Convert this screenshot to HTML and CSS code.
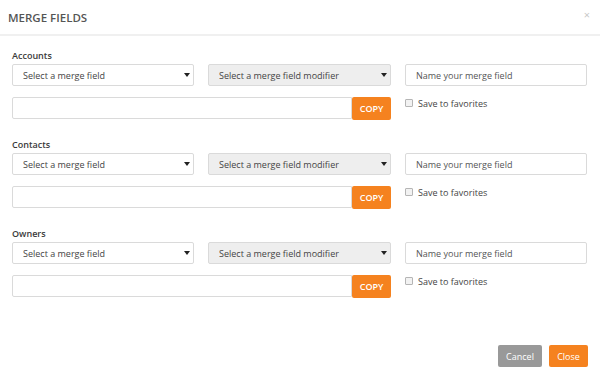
FILE: index.html
```html
<!DOCTYPE html>
<html lang="en">
<head>
    <meta charset="UTF-8">
    <title>Merge Fields</title>
    <link rel="stylesheet" href="styles.css">
</head>
<body>
<div class="modal">
    <div class="modal__header">
        <h4 class="modal__title">MERGE FIELDS</h4>
        <span class="modal__close">&times;</span>
    </div>
    <div class="modal__body">

        <div class="group">
            <div class="group__label">Accounts</div>
            <div class="grid">
                <div class="select-wrap">
                    <select class="field"><option>Select a merge field</option></select>
                    <svg class="arrow" width="6" height="4" viewBox="0 0 6 4"><path d="M0 0H6L3 4Z" fill="#222"/></svg>
                </div>
                <div class="select-wrap">
                    <select class="field field--muted"><option>Select a merge field modifier</option></select>
                    <svg class="arrow" width="6" height="4" viewBox="0 0 6 4"><path d="M0 0H6L3 4Z" fill="#222"/></svg>
                </div>
                <input class="field" type="text" placeholder="Name your merge field">
                <div class="copy-group">
                    <input class="field copy-group__input" type="text">
                    <button class="btn btn--orange copy-group__btn">COPY</button>
                </div>
                <label class="fav"><input type="checkbox" class="fav__box"> Save to favorites</label>
            </div>
        </div>

        <div class="group">
            <div class="group__label">Contacts</div>
            <div class="grid">
                <div class="select-wrap">
                    <select class="field"><option>Select a merge field</option></select>
                    <svg class="arrow" width="6" height="4" viewBox="0 0 6 4"><path d="M0 0H6L3 4Z" fill="#222"/></svg>
                </div>
                <div class="select-wrap">
                    <select class="field field--muted"><option>Select a merge field modifier</option></select>
                    <svg class="arrow" width="6" height="4" viewBox="0 0 6 4"><path d="M0 0H6L3 4Z" fill="#222"/></svg>
                </div>
                <input class="field" type="text" placeholder="Name your merge field">
                <div class="copy-group">
                    <input class="field copy-group__input" type="text">
                    <button class="btn btn--orange copy-group__btn">COPY</button>
                </div>
                <label class="fav"><input type="checkbox" class="fav__box"> Save to favorites</label>
            </div>
        </div>

        <div class="group">
            <div class="group__label">Owners</div>
            <div class="grid">
                <div class="select-wrap">
                    <select class="field"><option>Select a merge field</option></select>
                    <svg class="arrow" width="6" height="4" viewBox="0 0 6 4"><path d="M0 0H6L3 4Z" fill="#222"/></svg>
                </div>
                <div class="select-wrap">
                    <select class="field field--muted"><option>Select a merge field modifier</option></select>
                    <svg class="arrow" width="6" height="4" viewBox="0 0 6 4"><path d="M0 0H6L3 4Z" fill="#222"/></svg>
                </div>
                <input class="field" type="text" placeholder="Name your merge field">
                <div class="copy-group">
                    <input class="field copy-group__input" type="text">
                    <button class="btn btn--orange copy-group__btn">COPY</button>
                </div>
                <label class="fav"><input type="checkbox" class="fav__box"> Save to favorites</label>
            </div>
        </div>

    </div>
    <div class="modal__footer">
        <button class="btn btn--gray">Cancel</button>
        <button class="btn btn--orange">Close</button>
    </div>
</div>
</body>
</html>
```

FILE: styles.css
```css
body {
  margin: 0;
  padding: 0;
  font-family: "Open Sans", Arial, sans-serif;
  background-color: #FFFFFF;
  color: #333333;
}

.modal {
  width: 600px;
  height: 377px;
  display: flex;
  flex-direction: column;
}

.modal__header {
  height: 34px;
  padding: 0 8px;
  display: flex;
  align-items: center;
  justify-content: space-between;
  border-bottom: 2px solid #F0F0F0;
}

.modal__title {
  margin: 0;
  font-size: 11.5px;
  font-weight: 600;
  color: #555555;
}

.modal__close {
  font-size: 11px;
  color: #C8C8C8;
  margin-right: 2px;
  margin-top: -6px;
}

.modal__body {
  padding: 13px 13px 0 12px;
}

.group {
  margin-bottom: 18px;
}

.group__label {
  font-size: 9px;
  font-weight: 600;
  line-height: 14px;
  margin-bottom: 1px;
  color: #3A3A3A;
}

.grid {
  display: grid;
  grid-template-columns: 182px 183px 182px;
  column-gap: 14px;
  row-gap: 11px;
}

.field {
  display: block;
  box-sizing: border-box;
  width: 100%;
  height: 22px;
  margin: 0;
  padding: 0 10px;
  border: 1px solid #DADADA;
  border-radius: 2px;
  background-color: #FFFFFF;
  font-family: inherit;
  font-size: 9px;
  color: #444444;
  outline: none;
}

select.field {
  appearance: none;
  -webkit-appearance: none;
}

.field::placeholder {
  color: #555555;
}

.field--muted {
  background-color: #EEEEEE;
}

.select-wrap {
  position: relative;
  height: 22px;
}

.arrow {
  position: absolute;
  right: 4px;
  top: 9px;
  pointer-events: none;
}

.copy-group {
  grid-column: 1 / 3;
  display: flex;
}

.copy-group__input {
  flex: 1;
  border-radius: 2px 0 0 2px;
}

.copy-group__btn {
  width: 39px;
  height: 23px;
  border-radius: 0 2px 2px 0;
}

.fav {
  display: flex;
  align-items: center;
  font-size: 9px;
  color: #444444;
  height: 14px;
  margin-top: -1px;
}

.fav__box {
  appearance: none;
  -webkit-appearance: none;
  width: 8px;
  height: 8px;
  margin: 0 5px 0 0;
  border: 1px solid #B5B5B5;
  border-radius: 1px;
  background-color: #F2F2F2;
}

.btn {
  border: none;
  border-radius: 2px;
  font-family: inherit;
  font-size: 9px;
  color: #FFFFFF;
  padding: 0;
}

.btn--orange {
  background-color: #F5821F;
  font-weight: 600;
}

.btn--gray {
  background-color: #999999;
}

.modal__footer {
  margin-top: auto;
  display: flex;
  justify-content: flex-end;
  gap: 7px;
  padding: 0 12px 10px 0;
}

.modal__footer .btn {
  height: 22px;
  font-weight: 400;
}

.modal__footer .btn--gray {
  width: 44px;
}

.modal__footer .btn--orange {
  width: 39px;
}
```
